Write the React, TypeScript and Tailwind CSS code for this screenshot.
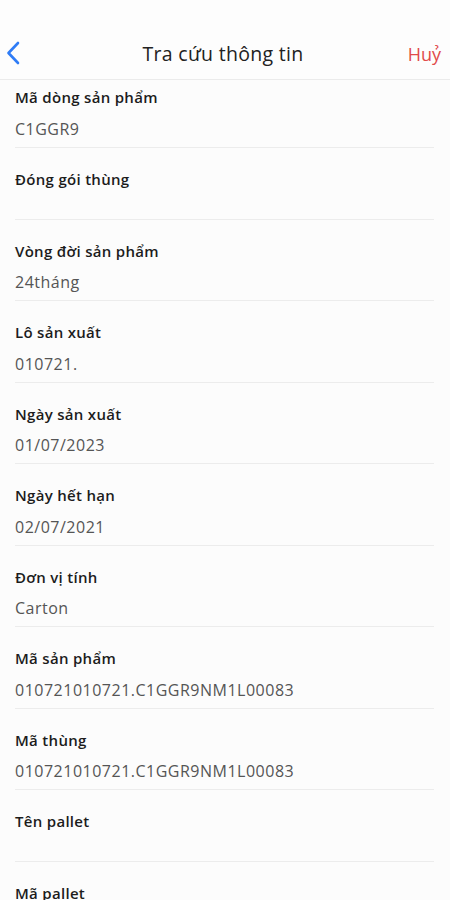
import React from 'react';

const fields = [
  { label: 'Mã dòng sản phẩm', value: 'C1GGR9' },
  { label: 'Đóng gói thùng', value: '' },
  { label: 'Vòng đời sản phẩm', value: '24tháng' },
  { label: 'Lô sản xuất', value: '010721.' },
  { label: 'Ngày sản xuất', value: '01/07/2023' },
  { label: 'Ngày hết hạn', value: '02/07/2021' },
  { label: 'Đơn vị tính', value: 'Carton' },
  { label: 'Mã sản phẩm', value: '010721010721.C1GGR9NM1L00083' },
  { label: 'Mã thùng', value: '010721010721.C1GGR9NM1L00083' },
  { label: 'Tên pallet', value: '' },
  { label: 'Mã pallet', value: '' },
];

export default function App() {
  return (
    <div className="w-[450px] h-[900px] overflow-hidden bg-[#fcfcfc] font-['Open_Sans',sans-serif]">
      <header className="h-[80px] flex items-end justify-between pb-[12px] bg-[#fdfdfd] border-b border-[#ebebeb]">
        <button className="w-[40px] pl-[6px] pb-[2px] text-[#2f7cf6]" aria-label="Back">
          <svg width="14" height="24" viewBox="0 0 14 24" fill="none">
            <path d="M12 2L2.5 12L12 22" stroke="currentColor" strokeWidth="2.6" strokeLinecap="round" strokeLinejoin="round" />
          </svg>
        </button>
        <h1 className="text-[19.5px] leading-[26px] text-[#222] tracking-[0.3px]">Tra cứu thông tin</h1>
        <button className="w-[44px] pr-[9px] text-right text-[18px] leading-[26px] text-[#e14a4a]">Huỷ</button>
      </header>

      <div>
        {fields.map((f, i) => (
          <div
            key={f.label}
            className={`ml-[15px] mr-[16px] border-b border-[#ececec] ${i === 0 ? 'pt-[6px]' : 'pt-[20px]'} ${f.value ? 'pb-[7px]' : 'pb-[29px]'}`}
          >
            <div className="text-[15px] leading-[22px] font-semibold text-[#1c1c1c] tracking-[0.3px]">{f.label}</div>
            {f.value && (
              <div className="mt-[9.5px] text-[16px] leading-[22px] text-[#555] tracking-[0.5px]">{f.value}</div>
            )}
          </div>
        ))}
      </div>
    </div>
  );
}
